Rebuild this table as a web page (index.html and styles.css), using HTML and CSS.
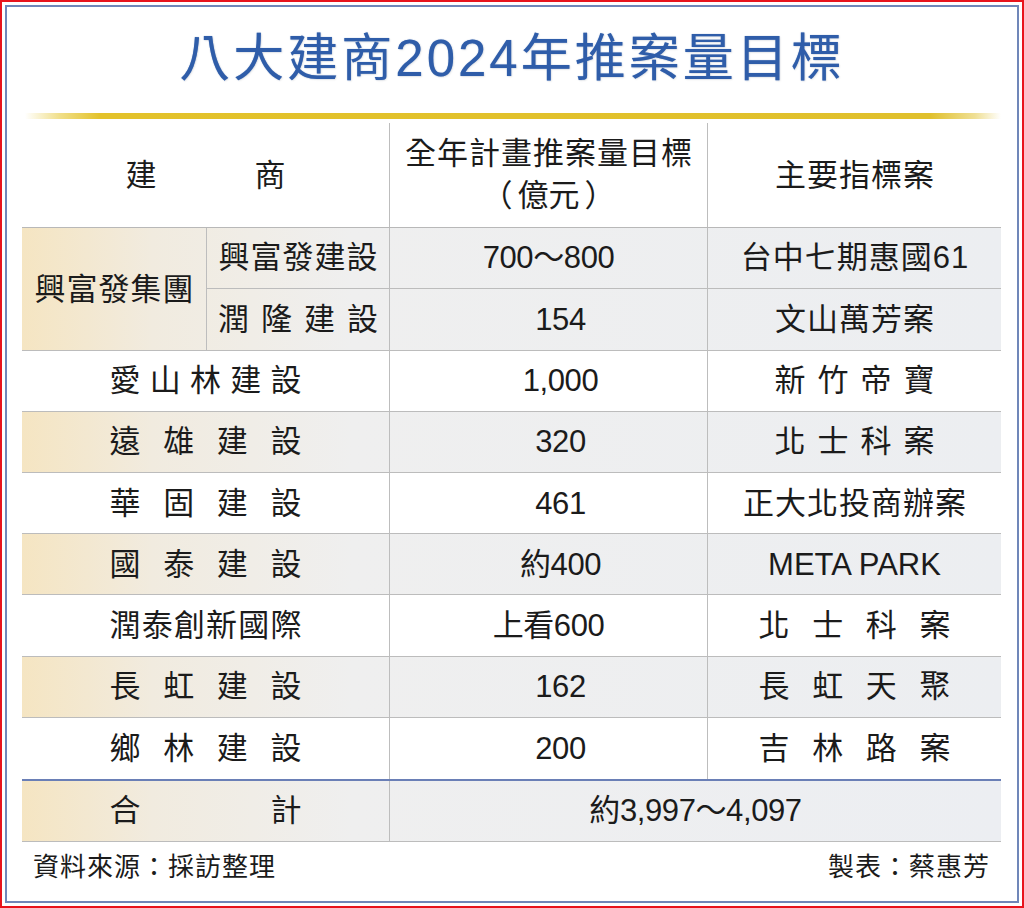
FILE: index.html
```html
<!DOCTYPE html>
<html lang="zh-Hant">
<head>
<meta charset="utf-8">
<title>八大建商2024年推案量目標</title>
<link rel="stylesheet" href="styles.css">
</head>
<body>
<div class="page">
  <div class="frame">
    <h1 class="title">八大建商2024年推案量目標</h1>
    <div class="bar"></div>
    <div class="table">
      <div class="row head">
        <div class="c c1"><span class="j j5">建商</span></div>
        <div class="c c2 stack"><div class="cj">全年計畫推案量目標</div><div><span class="pl">（</span>億元<span class="pr">）</span></div></div>
        <div class="c c3"><span class="cj">主要指標案</span></div>
      </div>
      <div class="group tint">
        <div class="c g-name"><span class="cj">興富發集團</span></div>
        <div class="c g-sub b"><span class="cj">興富發建設</span></div>
        <div class="c c2 b num">700～800</div>
        <div class="c c3 b"><span class="cj">台中七期惠國61</span></div>
        <div class="c g-sub"><span class="j j5">潤隆建設</span></div>
        <div class="c c2 num sh">154</div>
        <div class="c c3"><span class="cj">文山萬芳案</span></div>
      </div>
      <div class="row">
        <div class="c c1"><span class="j j6">愛山林建設</span></div>
        <div class="c c2 num sh">1,000</div>
        <div class="c c3"><span class="j j5">新竹帝寶</span></div>
      </div>
      <div class="row tint">
        <div class="c c1"><span class="j j6">遠雄建設</span></div>
        <div class="c c2 num sh">320</div>
        <div class="c c3"><span class="j j5">北士科案</span></div>
      </div>
      <div class="row">
        <div class="c c1"><span class="j j6">華固建設</span></div>
        <div class="c c2 num sh">461</div>
        <div class="c c3"><span class="cj">正大北投商辦案</span></div>
      </div>
      <div class="row tint">
        <div class="c c1"><span class="j j6">國泰建設</span></div>
        <div class="c c2 num sh">約400</div>
        <div class="c c3"><span class="latin">META PARK</span></div>
      </div>
      <div class="row">
        <div class="c c1"><span class="j j6">潤泰創新國際</span></div>
        <div class="c c2 num">上看600</div>
        <div class="c c3"><span class="j j6">北士科案</span></div>
      </div>
      <div class="row tint">
        <div class="c c1"><span class="j j6">長虹建設</span></div>
        <div class="c c2 num sh">162</div>
        <div class="c c3"><span class="j j6">長虹天聚</span></div>
      </div>
      <div class="row last">
        <div class="c c1"><span class="j j6">鄉林建設</span></div>
        <div class="c c2 num sh">200</div>
        <div class="c c3"><span class="j j6">吉林路案</span></div>
      </div>
      <div class="row total tint">
        <div class="c c1"><span class="j j6">合計</span></div>
        <div class="c c23 num">約3,997～4,097</div>
      </div>
    </div>
    <div class="foot">
      <span>資料來源：採訪整理</span>
      <span>製表：蔡惠芳</span>
    </div>
  </div>
</div>
</body>
</html>
```

FILE: styles.css
```css
* { box-sizing: border-box; }

html, body {
  margin: 0;
  padding: 0;
  background: #ffffff;
}

body {
  font-family: "Liberation Sans", "Noto Sans CJK TC", sans-serif;
  color: #1b1b1b;
}

.page {
  width: 1024px;
  height: 908px;
  border: 2px solid #e8141c;
  padding: 3px;
  background: #ffffff;
}

.frame {
  height: 100%;
  border: 2px solid #7087b9;
  padding: 0 15px;
  display: flex;
  flex-direction: column;
}

.title {
  margin: 0;
  height: 106px;
  padding-top: 24px;
  text-align: center;
  font-size: 51px;
  line-height: 56px;
  font-weight: 400;
  letter-spacing: 3px;
  color: #2f5da9;
  text-shadow: 0 0 1px rgba(47, 93, 169, 0.6), 1px 1px 2px rgba(0, 0, 0, 0.08);
}

.bar {
  height: 6px;
  margin: 0 0 4px 3px;
  width: 976px;
  background: linear-gradient(90deg,
    rgba(228, 196, 40, 0) 0px,
    rgba(228, 196, 40, 0.55) 35px,
    #e3c22a 75px,
    #e0c02c 905px,
    rgba(224, 192, 44, 0.5) 950px,
    rgba(224, 192, 44, 0) 976px);
}

.table {
  width: 979px;
  font-size: 31px;
}

.row {
  display: grid;
  grid-template-columns: 368px 318px 293px;
  height: 61.2px;
  border-bottom: 1px solid #bcbcbc;
}

.row.head {
  height: 105px;
  border-bottom: 1px solid #b8b8b8;
}

.row.last {
  border-bottom: 0;
}

.row.total {
  grid-template-columns: 368px 611px;
  height: 63px;
  border-top: 2px solid #6a7fb6;
  border-bottom: 1px solid #bcbcbc;
  background: linear-gradient(90deg, #f5e5c2 0px, #f1ebdf 130px, #efefef 330px, #eceef2 100%);
}

.group {
  display: grid;
  grid-template-columns: 185px 183px 318px 293px;
  grid-template-rows: 1fr 1fr;
  height: 122.67px;
  border-bottom: 1px solid #bcbcbc;
}

.tint {
  background: linear-gradient(90deg, #f5e5c2 0px, #f1ebdf 130px, #efefef 330px, #eceef1 100%);
}

.c {
  display: flex;
  align-items: center;
  justify-content: center;
  line-height: 1;
  white-space: nowrap;
}

.c1, .c2, .g-name, .g-sub {
  border-right: 1px solid #bdbdbd;
}

.g-name {
  grid-row: span 2;
  padding-top: 2px;
}

.b {
  border-bottom: 1px solid #bcbcbc;
}

.stack {
  flex-direction: column;
  line-height: 42px;
}

.pl { margin-right: 5px; }
.pr { margin-left: 5px; }

.cj {
  letter-spacing: 1px;
  margin-right: -1px;
}

.j {
  display: inline-block;
  text-align: justify;
  text-align-last: justify;
  letter-spacing: 0;
}

.j5 { width: 160px; }
.j6 { width: 192px; }

.num {
  letter-spacing: -0.4px;
}

.num.sh {
  padding-left: 24px;
}

.latin {
  letter-spacing: 0;
}

.foot {
  display: flex;
  justify-content: space-between;
  align-items: center;
  height: 46px;
  padding: 0 12px 0 11px;
  font-size: 26px;
  letter-spacing: 1px;
  color: #1b1b1b;
}
```
